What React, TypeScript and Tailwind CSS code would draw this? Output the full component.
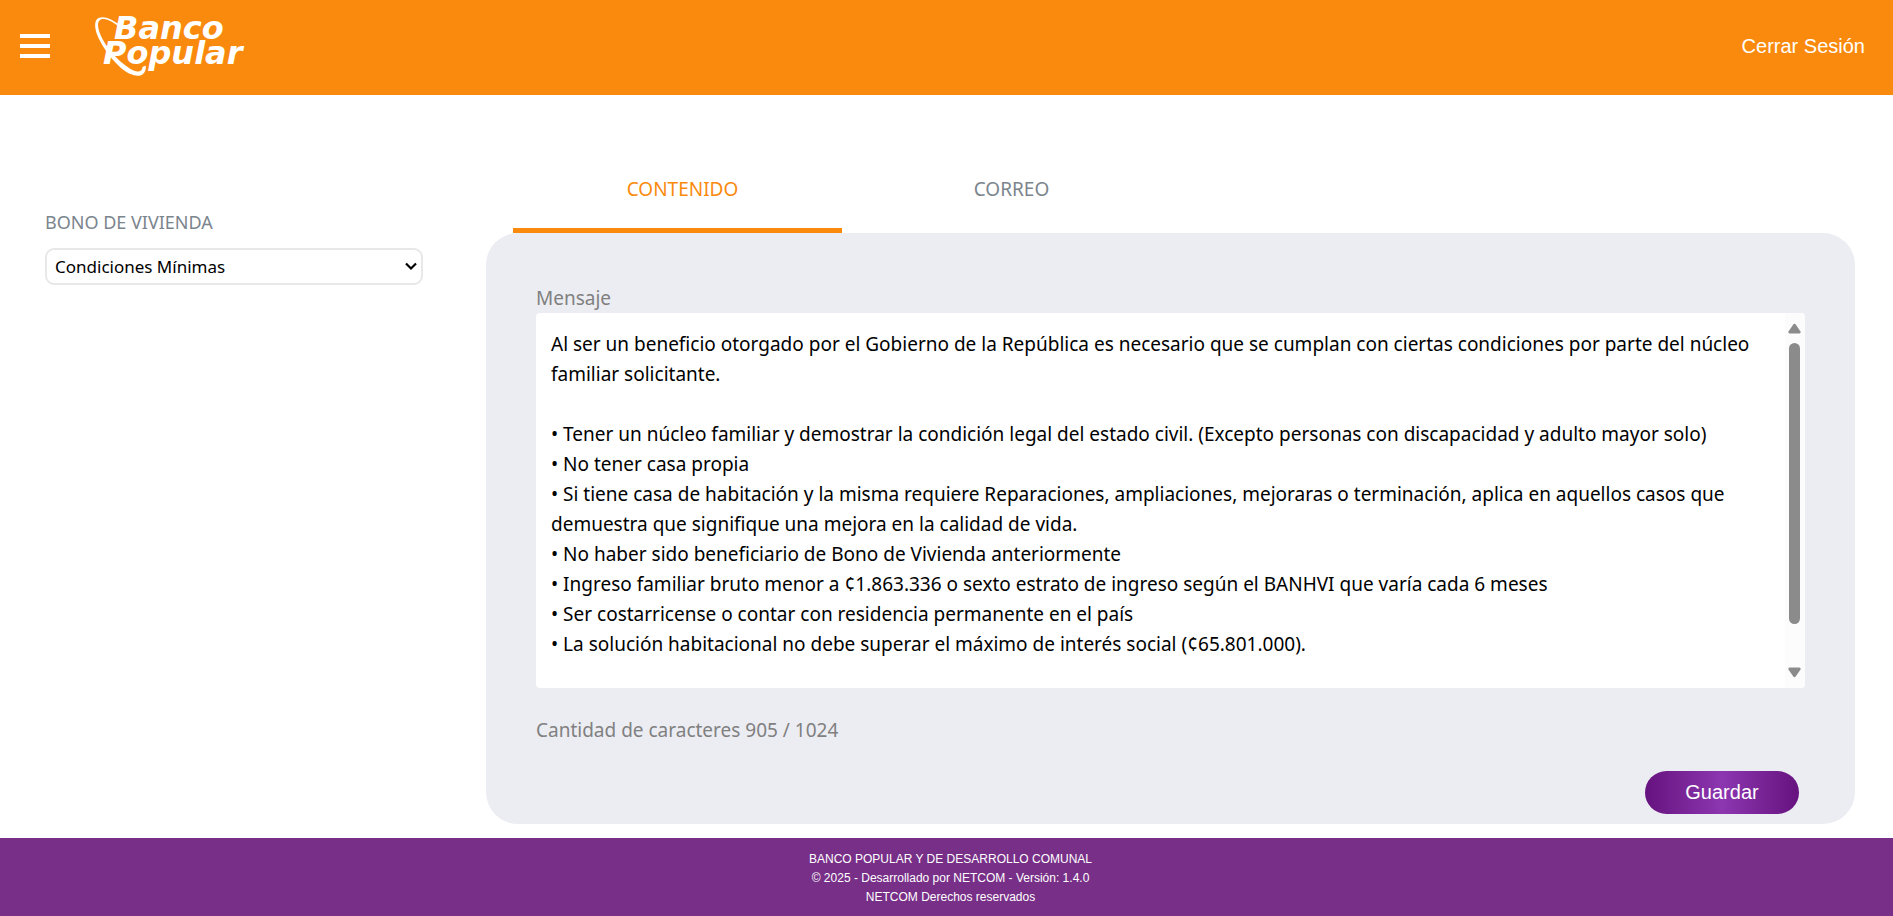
import { useState } from "react";

const MESSAGE = `Al ser un beneficio otorgado por el Gobierno de la República es necesario que se cumplan con ciertas condiciones por parte del núcleo familiar solicitante.

• Tener un núcleo familiar y demostrar la condición legal del estado civil. (Excepto personas con discapacidad y adulto mayor solo)
• No tener casa propia
• Si tiene casa de habitación y la misma requiere Reparaciones, ampliaciones, mejoraras o terminación, aplica en aquellos casos que demuestra que signifique una mejora en la calidad de vida.
• No haber sido beneficiario de Bono de Vivienda anteriormente
• Ingreso familiar bruto menor a ¢1.863.336 o sexto estrato de ingreso según el BANHVI que varía cada 6 meses
• Ser costarricense o contar con residencia permanente en el país
• La solución habitacional no debe superar el máximo de interés social (¢65.801.000).`;

function Logo() {
  return (
    <svg
      width="160"
      height="64"
      viewBox="94 13 160 64"
      role="img"
      aria-label="Banco Popular"
      fill="#fff"
      className="overflow-visible"
    >
      <path d="M119 23.5 C112 18 104 14.5 98.500 17 C93.500 19.500 94.500 29 99 38 C104 48 112 59 121 67 C129 74 138 76.500 142.500 73.500 C145.500 71 146.500 67 145.500 64.500 L142.500 66 C142.500 70 139 72 133.500 69.500 C126 66 115 56.500 107.500 46 C100 35.500 95.500 23.500 99.500 19.500 C103.500 16 111 19.500 118 25 Z" />
      <text
        fontFamily="'DejaVu Sans', sans-serif"
        fontWeight="700"
        fontStyle="italic"
        fontSize="32"
      >
        <tspan x="114" y="38">
          Banco
        </tspan>
        <tspan x="103" y="63">
          Popular
        </tspan>
      </text>
    </svg>
  );
}

function ScrollRail() {
  return (
    <div
      aria-hidden="true"
      className="pointer-events-none absolute inset-y-0 right-0 flex w-5 flex-col items-center rounded-r bg-[#fcfcfc] py-[10px] pr-[2px]"
    >
      <svg width="13" height="11" viewBox="0 0 13 11" fill="#8b8b8b">
        <path d="M5.300 1.500 Q6.500 0 7.700 1.500 L12.500 8.500 Q13 10.500 11.500 10.500 H1.500 Q0 10.500 .5 8.500 Z" />
      </svg>
      <div className="mt-[9px] h-[281px] w-[11px] rounded-full bg-[#8b8b8b]" />
      <svg className="mt-auto" width="13" height="11" viewBox="0 0 13 11" fill="#8b8b8b">
        <path d="M5.300 9.500 Q6.500 11 7.700 9.500 L12.500 2.500 Q13 .5 11.500 .5 H1.500 Q0 .5 .5 2.500 Z" />
      </svg>
    </div>
  );
}

export default function App() {
  const [tab, setTab] = useState("CONTENIDO");
  const [message, setMessage] = useState(MESSAGE);

  return (
    <div className="flex min-h-screen flex-col bg-white font-['Noto_Sans',sans-serif]">
      <header className="flex h-[95px] items-center bg-[#fa8a0d] pb-1 pl-5 pr-7">
        <button type="button" aria-label="Menú" className="flex w-[30px] flex-col gap-[6px]">
          <span className="h-1 w-full bg-white" />
          <span className="h-1 w-full bg-white" />
          <span className="h-1 w-full bg-white" />
        </button>
        <a href="#" className="ml-11">
          <Logo />
        </a>
        <a href="#" className="ml-auto font-['Liberation_Sans',sans-serif] text-xl text-white">
          Cerrar Sesión
        </a>
      </header>

      <main className="flex flex-1 gap-[63px] pb-[14px] pl-[45px] pr-[38px]">
        <aside className="w-[378px] shrink-0 pt-[115px]">
          <label htmlFor="section" className="block text-lg leading-6 text-[#7b858d]">
            BONO DE VIVIENDA
          </label>
          <div className="relative mt-[14px]">
            <select
              id="section"
              className="h-[37px] w-full appearance-none rounded-[9px] border-2 border-[#e8e8e8] bg-white px-2 text-[17px] leading-6 text-black"
            >
              <option>Condiciones Mínimas</option>
            </select>
            <svg
              className="pointer-events-none absolute right-[6px] top-[14px]"
              width="12"
              height="9"
              viewBox="0 0 12 9"
              fill="none"
              stroke="#000"
              strokeWidth="2.200"
            >
              <path d="M1 1.500 L6 6.500 L11 1.500" />
            </svg>
          </div>
        </aside>

        <section className="flex min-w-0 flex-1 flex-col pt-[55px]">
          <div role="tablist" className="flex pl-[27px]">
            {["CONTENIDO", "CORREO"].map((name) => (
              <button
                key={name}
                type="button"
                role="tab"
                aria-selected={tab === name}
                onClick={() => setTab(name)}
                className={
                  tab === name
                    ? "h-[83px] w-[329px] border-b-[5px] border-[#fa8a0d] pl-[10px] text-[19px] text-[#fa8a0d]"
                    : "h-[83px] w-[329px] border-b-[5px] border-transparent pl-[10px] text-[19px] text-[#7b858d]"
                }
              >
                {name}
              </button>
            ))}
          </div>

          <div className="flex-1 rounded-[32px] bg-[#ecedf3] px-[50px] pb-[10px] pt-[51px]">
            <label htmlFor="message" className="block text-[19px] leading-[29px] text-[#808080]">
              Mensaje
            </label>
            <div className="relative">
              <textarea
                id="message"
                value={message}
                maxLength={1024}
                onChange={(e) => setMessage(e.target.value)}
                className="block h-[375px] w-full resize-none rounded bg-white pb-4 pl-[15px] pr-9 pt-4 text-[19px] leading-[30px] text-black outline-none [scrollbar-width:none]"
              />
              <ScrollRail />
            </div>
            <p className="mt-7 text-[19px] leading-[29px] text-[#808080]">
              Cantidad de caracteres 905 / 1024
            </p>
            <div className="mt-[26px] flex justify-end pr-[6px]">
              <button
                type="button"
                className="h-[43px] w-[154px] rounded-full bg-linear-to-r from-[#66127f] via-[#8c36b0] to-[#66127f] pb-[2px] font-['Liberation_Sans',sans-serif] text-xl text-white"
              >
                Guardar
              </button>
            </div>
          </div>
        </section>
      </main>

      <footer className="bg-[#772f87] pb-[9px] pl-2 pt-3 text-center font-['Liberation_Sans',sans-serif] text-xs leading-[19px] text-white">
        <p>BANCO POPULAR Y DE DESARROLLO COMUNAL</p>
        <p>© 2025 - Desarrollado por NETCOM - Versión: 1.4.0</p>
        <p>NETCOM Derechos reservados</p>
      </footer>
    </div>
  );
}
